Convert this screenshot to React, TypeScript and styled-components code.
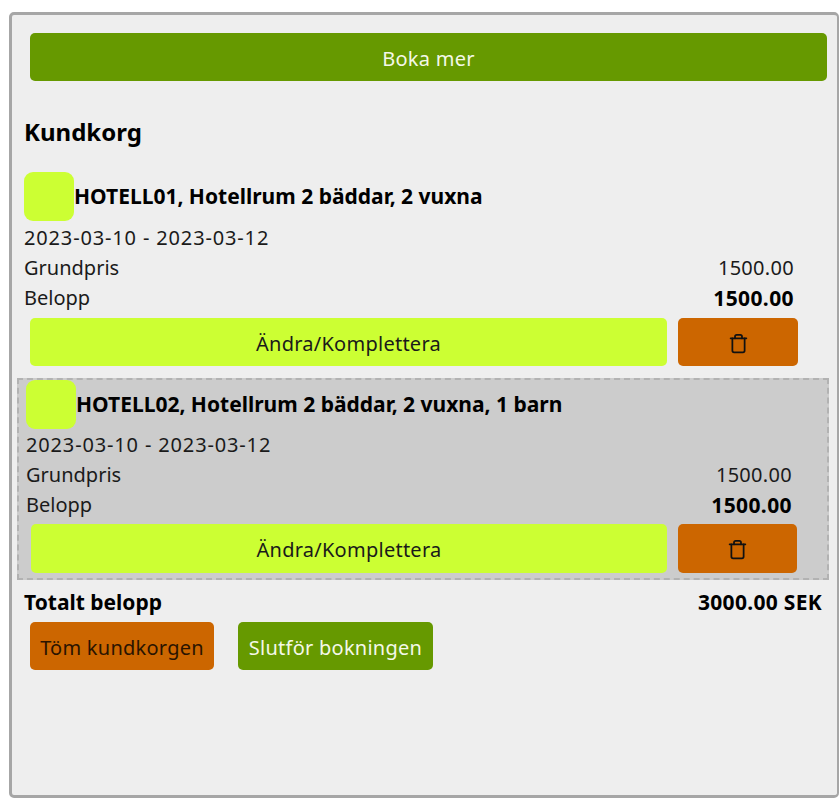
import React from 'react'
import styled, { createGlobalStyle } from 'styled-components'
import { Trash } from 'lucide-react'

const colors = {
  panel: '#eeeeee',
  border: '#a6a6a6',
  green: '#669900',
  lime: '#ccff33',
  orange: '#cc6600',
  selected: '#cccccc',
  text: '#1a1a1a',
}

const GlobalStyle = createGlobalStyle`
  html, body {
    margin: 0;
    padding: 0;
    background: #fff;
  }
  body {
    font-family: "Noto Sans", "Open Sans", sans-serif;
    color: ${colors.text};
  }
`

const Page = styled.div`
  padding: 12px 0 0 9px;
`

const Panel = styled.div`
  box-sizing: border-box;
  width: 830px;
  height: 786px;
  padding: 18px 15px 0 12px;
  border: 3px solid ${colors.border};
  border-right-width: 2px;
  border-radius: 5px;
  background: ${colors.panel};
`

const Button = styled.button<{ $bg: string; $fg: string; $height?: number }>`
  display: flex;
  align-items: center;
  justify-content: center;
  height: ${({ $height }) => $height || 48}px;
  padding: 2px 0 0;
  border: 0;
  border-radius: 5px;
  background: ${({ $bg }) => $bg};
  color: ${({ $fg }) => $fg};
  font-family: inherit;
  font-size: 20px;
  letter-spacing: 0.25px;
  white-space: nowrap;
`

const BookMore = styled(Button)`
  width: 797px;
  margin: 0 0 0 6px;
`

const Title = styled.h2`
  margin: 34px 0 23px;
  height: 34px;
  font-size: 24px;
  line-height: 34px;
  font-weight: 700;
  color: #000;
`

const Item = styled.div<{ $selected?: boolean }>`
  ${({ $selected }) =>
    $selected
      ? `
    margin: 12px -7px 0;
    padding: 0 30px 5px 7px;
    border: 2px dashed #b2b2b2;
    background: ${colors.selected};
  `
      : `
    padding-right: 24px;
  `}
`

const ItemHead = styled.div<{ $selected?: boolean }>`
  display: flex;
  align-items: center;
  height: 49px;
  margin-bottom: ${({ $selected }) => ($selected ? 1 : 2)}px;
`

const Swatch = styled.div`
  width: 50px;
  height: 49px;
  border-radius: 9px;
  background: ${colors.lime};
`

const ItemName = styled.h3`
  margin: 0 0 2px;
  font-size: 21px;
  font-weight: 700;
  color: #000;
`

const Line = styled.div`
  display: flex;
  justify-content: space-between;
  height: 30px;
  font-size: 20px;
  line-height: 30px;
`

const DateText = styled.span`
  letter-spacing: 0.85px;
`

const Money = styled.span<{ $bold?: boolean; $selected?: boolean }>`
  padding-right: ${({ $selected }) => ($selected ? 5 : 4)}px;
  font-size: ${({ $bold }) => ($bold ? 21 : 20)}px;
  font-weight: ${({ $bold }) => ($bold ? 700 : 400)};
  letter-spacing: ${({ $bold }) => ($bold ? 0.4 : 0.3)}px;
  color: ${({ $bold }) => ($bold ? '#000' : colors.text)};
`

const ItemActions = styled.div<{ $selected?: boolean }>`
  display: flex;
  gap: 11px;
  margin: ${({ $selected }) => ($selected ? '4px 0 0 5px' : '5px 0 0 6px')};
`

const EditButton = styled(Button)`
  flex: 1;
`

const DeleteButton = styled(Button)<{ $selected?: boolean }>`
  width: ${({ $selected }) => ($selected ? 119 : 120)}px;
`

const TotalRow = styled.div`
  display: flex;
  justify-content: space-between;
  height: 30px;
  margin-top: 7px;
  font-size: 21px;
  line-height: 30px;
  font-weight: 700;
  color: #000;
`

const TotalAmount = styled.span`
  letter-spacing: 0.3px;
`

const Footer = styled.div`
  display: flex;
  gap: 24px;
  margin: 5px 0 0 6px;
`

const FooterButton = styled(Button)<{ $width: number }>`
  width: ${({ $width }) => $width}px;
`

const items = [
  { id: 'HOTELL01', name: 'HOTELL01, Hotellrum 2 bäddar, 2 vuxna', selected: false },
  { id: 'HOTELL02', name: 'HOTELL02, Hotellrum 2 bäddar, 2 vuxna, 1 barn', selected: true },
]

export default function App() {
  return (
    <Page>
      <GlobalStyle />
      <Panel>
        <BookMore $bg={colors.green} $fg="#f4f8e8">Boka mer</BookMore>
        <Title>Kundkorg</Title>
        {items.map(item => {
          const buttonHeight = item.selected ? 49 : 48
          return (
            <Item key={item.id} $selected={item.selected}>
              <ItemHead $selected={item.selected}>
                <Swatch />
                <ItemName>{item.name}</ItemName>
              </ItemHead>
              <Line>
                <DateText>2023-03-10 - 2023-03-12</DateText>
              </Line>
              <Line>
                <span>Grundpris</span>
                <Money $selected={item.selected}>1500.00</Money>
              </Line>
              <Line>
                <span>Belopp</span>
                <Money $bold $selected={item.selected}>1500.00</Money>
              </Line>
              <ItemActions $selected={item.selected}>
                <EditButton $height={buttonHeight} $bg={colors.lime} $fg={colors.text}>Ändra/Komplettera</EditButton>
                <DeleteButton $height={buttonHeight} $selected={item.selected} $bg={colors.orange} $fg="#111">
                  <Trash size={21} strokeWidth={2} />
                </DeleteButton>
              </ItemActions>
            </Item>
          )
        })}
        <TotalRow>
          <span>Totalt belopp</span>
          <TotalAmount>3000.00 SEK</TotalAmount>
        </TotalRow>
        <Footer>
          <FooterButton $width={184} $bg={colors.orange} $fg="#2a1400">Töm kundkorgen</FooterButton>
          <FooterButton $width={195} $bg={colors.green} $fg="#f4f8e8">Slutför bokningen</FooterButton>
        </Footer>
      </Panel>
    </Page>
  )
}
